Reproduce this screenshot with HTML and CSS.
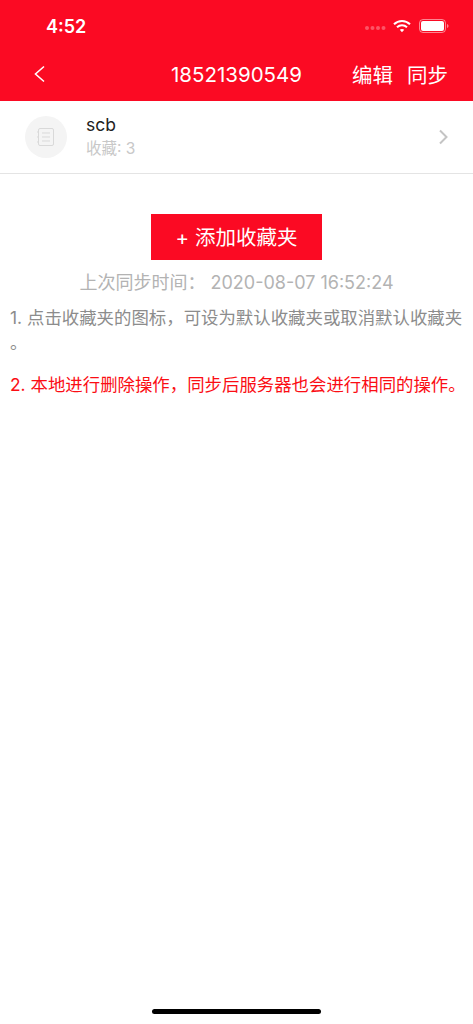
FILE: index.html
```html
<!DOCTYPE html>
<html lang="zh">
<head>
<meta charset="utf-8">
<title>收藏夹</title>
<link rel="stylesheet" href="styles.css">
</head>
<body>
<div class="screen">
  <header class="top">
    <div class="status">
      <span class="clock">4:52</span>
      <div class="status-icons">
        <svg class="dots" width="21" height="4" viewBox="0 0 21 4"><g fill="#fff" opacity=".3"><circle cx="2" cy="2" r="2"/><circle cx="7.500" cy="2" r="2"/><circle cx="13" cy="2" r="2"/><circle cx="18.500" cy="2" r="2"/></g></svg>
        <svg class="wifi" width="18" height="14" viewBox="0 0 18 14"><g fill="none" stroke="#fff" stroke-width="2"><path d="M1 5.200C5.500 .8 12.500 .8 17 5.200"/><path d="M4 8.200C6.800 5.600 11.200 5.600 14 8.200"/></g><path d="M6.800 10.800C8 9.800 10 9.800 11.200 10.800L9 13.300Z" fill="#fff"/></svg>
        <svg class="battery" width="30" height="14" viewBox="0 0 30 14"><rect x=".5" y=".5" width="26" height="13" rx="3.500" fill="none" stroke="#fff" stroke-opacity=".5"/><rect x="2" y="2" width="23" height="10" rx="2" fill="#fff"/><path d="M28 5v4c.8-.3 1.500-1 1.500-2S28.800 5.300 28 5z" fill="#fff" opacity=".5"/></svg>
      </div>
    </div>
    <nav class="nav">
      <svg class="back" width="13" height="18" viewBox="0 0 13 18"><path d="M11 1.500 2.500 9l8.500 7.500" fill="none" stroke="#fff" stroke-width="1.600"/></svg>
      <h1 class="title">18521390549</h1>
      <div class="actions"><span>编辑</span><span>同步</span></div>
    </nav>
  </header>

  <section class="folder">
    <div class="avatar">
      <svg width="20" height="20" viewBox="0 0 20 20"><g fill="none" stroke="#d9d9d9" stroke-width="1"><rect x="2.500" y="1.500" width="15" height="17" rx="1.500"/><path d="M6 6h8M6 10h8M6 14h8M1 5h2M1 10h2M1 15h2"/></g></svg>
    </div>
    <div class="folder-text">
      <div class="folder-name">scb</div>
      <div class="folder-count">收藏: 3</div>
    </div>
    <svg class="chevron" width="11" height="16" viewBox="0 0 11 16"><path d="M2 1.500 8.500 8 2 14.500" fill="none" stroke="#c4c4c4" stroke-width="2"/></svg>
  </section>

  <main class="content">
    <button class="add">+ 添加收藏夹</button>
    <p class="sync">上次同步时间： 2020-08-07 16:52:24</p>
    <p class="note">1. 点击收藏夹的图标，可设为默认收藏夹或取消默认收藏夹。</p>
    <p class="warn">2. 本地进行删除操作，同步后服务器也会进行相同的操作。</p>
  </main>

  <div class="home-bar"></div>
</div>
</body>
</html>
```
FILE: styles.css
```css
* { box-sizing: border-box; }
html, body { margin: 0; padding: 0; background: #fff; }
body { font-family: "Inter", "Noto Sans CJK SC", sans-serif; }
.screen { width: 473px; height: 1024px; display: flex; flex-direction: column; overflow: hidden; }

.top { height: 101px; background: #fb0a23; color: #fff; display: flex; flex-direction: column; }
.status { height: 50px; display: flex; align-items: center; justify-content: space-between; padding: 2px 24px 0 46px; }
.clock { font-size: 18px; font-weight: 600; }
.status-icons { display: flex; align-items: center; }
.dots { margin-top: 3px; }
.wifi { margin-left: 7px; }
.battery { margin-left: 8px; }

.nav { flex: 1; position: relative; display: flex; align-items: center; justify-content: space-between; padding: 0 25px 3px 33px; }
.title { position: absolute; left: 0; right: 0; margin: 0; text-align: center; font-size: 20.500px; font-weight: 400; pointer-events: none; }
.actions { display: flex; gap: 14px; font-size: 20.500px; }

.folder { height: 73px; border-bottom: 1px solid #e4e4e4; display: flex; align-items: center; padding: 0 24px 0 25px; }
.avatar { width: 42px; height: 42px; border-radius: 50%; background: #f4f4f4; display: flex; align-items: center; justify-content: center; }
.folder-text { flex: 1; margin-left: 19px; }
.folder-name { font-size: 17.500px; line-height: 22px; color: #222; margin-top: -1px; }
.folder-count { font-size: 15.500px; line-height: 20px; margin-top: 3px; color: #c8c8c8; }

.content { display: flex; flex-direction: column; align-items: center; padding: 40px 10px 0; }
.add { width: 171px; height: 46px; border: 0; border-radius: 0; background: #fb0a23; color: #fff; font: inherit; font-size: 20.500px; padding: 0 0 2px; }
.sync { margin: 11px 0 0; font-size: 18px; line-height: 24px; color: #b3b3b3; }
.note { align-self: stretch; margin: 10px 0 0; font-size: 17.420px; line-height: 25px; color: #8c8c8c; line-break: anywhere; }
.warn { align-self: stretch; margin: 17px 0 0; font-size: 17.420px; line-height: 25px; color: #fb0d14; white-space: nowrap; }

.home-bar { position: absolute; left: 152px; top: 1009px; width: 169px; height: 5px; border-radius: 3px; background: #000; }
```
